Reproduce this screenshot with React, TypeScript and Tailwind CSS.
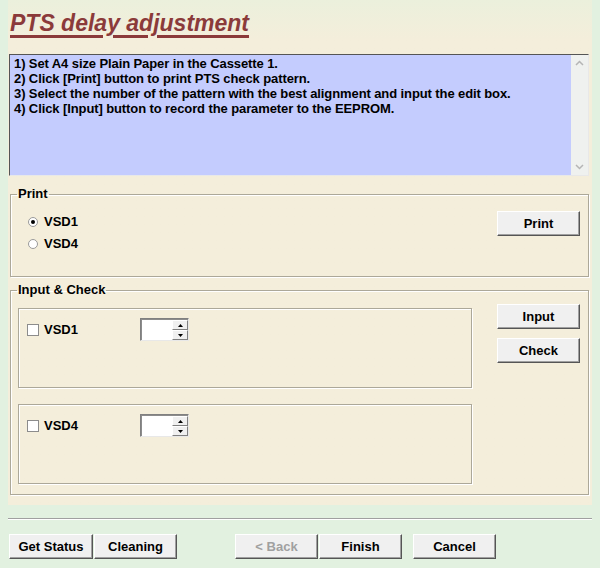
import React, { useState } from 'react';

const font = { fontFamily: '"Liberation Sans", Arial, sans-serif' };

const WinButton: React.FC<{ label: string; disabled?: boolean; className?: string }> = ({ label, disabled, className }) => (
  <button
    className={`h-[25px] w-[83px] bg-[#f0f0f0] border border-t-white border-l-white border-r-[#555] border-b-[#555] shadow-[inset_-1px_-1px_0_#a0a0a0] text-[13px] font-bold ${
      disabled ? 'text-[#a0a0a0]' : 'text-black'
    } ${className || ''}`}
  >
    {label}
  </button>
);

const Radio: React.FC<{ checked: boolean; label: string; onClick: () => void }> = ({ checked, label, onClick }) => (
  <div className="flex items-center h-[22px] cursor-default" onClick={onClick}>
    <span className="w-[10px] h-[10px] rounded-full bg-white border border-[#9a9a9a] flex items-center justify-center">
      {checked && <span className="w-[4px] h-[4px] rounded-full bg-black" />}
    </span>
    <span className="ml-[6px] text-[13px] font-bold text-black">{label}</span>
  </div>
);

const Spin: React.FC = () => (
  <div className="flex w-[49px] h-[23px] bg-white border border-t-[#808080] border-l-[#808080] border-r-[#e8e8e8] border-b-[#e8e8e8]">
    <div className="flex-1 border-t border-l border-[#404040]/60" />
    <div className="flex flex-col w-[16px] border-t border-[#404040]/60">
      <div className="flex-1 bg-[#f0f0f0] border border-t-white border-l-white border-r-[#808080] border-b-[#808080] flex items-center justify-center">
        <svg width="5" height="3" viewBox="0 0 5 3"><path d="M2.5 0L5 3H0z" fill="#000" /></svg>
      </div>
      <div className="flex-1 bg-[#f0f0f0] border border-t-white border-l-white border-r-[#808080] border-b-[#808080] flex items-center justify-center">
        <svg width="5" height="3" viewBox="0 0 5 3"><path d="M0 0H5L2.5 3z" fill="#000" /></svg>
      </div>
    </div>
  </div>
);

const CheckRow: React.FC<{ label: string }> = ({ label }) => {
  const [checked, setChecked] = useState(false);
  return (
    <div className="w-[454px] h-[80px] border border-[#aca899] shadow-[inset_1px_1px_0_#fff,1px_1px_0_#fff]">
      <div className="flex items-center pt-[9px] pl-[8px]">
        <span
          className="w-[12px] h-[12px] bg-white border border-[#8c8c8c] flex items-center justify-center"
          onClick={() => setChecked(!checked)}
        >
          {checked && <span className="w-[6px] h-[6px] bg-black" />}
        </span>
        <span className="ml-[5px] w-[96px] text-[13px] font-bold text-black">{label}</span>
        <Spin />
      </div>
    </div>
  );
};

const steps = [
  '1) Set A4 size Plain Paper in the Cassette 1.',
  '2) Click [Print] button to print PTS check pattern.',
  '3) Select the number of the pattern with the best alignment and input the edit box.',
  '4) Click [Input] button to record the parameter to the EEPROM.',
];

export default function App() {
  const [vsd, setVsd] = useState<'VSD1' | 'VSD4'>('VSD1');

  return (
    <div className="w-[600px] h-[568px] bg-[#e2f1e0] overflow-hidden" style={font}>
      <div className="mx-[8px] h-[505px] bg-gradient-to-b from-[#ebf0dc] to-[#f4eedb] to-[40px] pl-[1px] pr-[3px]">
        <div className="h-[54px] pt-[9px] pl-[1px]">
          <h1 className="text-[23px] font-bold italic text-[#8b3a3a] underline decoration-[3px] underline-offset-[4px] leading-[28px]">
            PTS delay adjustment
          </h1>
        </div>

        <div className="flex h-[122px] bg-[#c4ccfe] border border-t-[#555] border-l-[#555] border-r-[#e8e8e8] border-b-[#e8e8e8]">
          <div className="flex-1 pl-[4px] pt-[1px] text-[13px] tracking-[-0.1px] font-bold leading-[15px] text-black">
            {steps.map(s => (
              <div key={s}>{s}</div>
            ))}
          </div>
          <div className="w-[17px] bg-[#eff1ef] flex flex-col justify-between items-center py-[5px]">
            <svg width="9" height="6" viewBox="0 0 9 6"><path d="M1 5L4.5 1.5L8 5" stroke="#b5b5b5" strokeWidth="1.5" fill="none" /></svg>
            <svg width="9" height="6" viewBox="0 0 9 6"><path d="M1 1L4.5 4.5L8 1" stroke="#b5b5b5" strokeWidth="1.5" fill="none" /></svg>
          </div>
        </div>

        <fieldset className="mt-[11px] ml-[1px] h-[90px] border border-[#aca899] shadow-[inset_1px_1px_0_#fff,1px_1px_0_#fff]">
          <legend className="ml-[6px] px-[1px] text-[13px] font-bold leading-[14px] text-black">Print</legend>
          <div className="flex justify-between pr-[8px]">
            <div className="pl-[17px] pt-[10px]">
              <Radio checked={vsd === 'VSD1'} label="VSD1" onClick={() => setVsd('VSD1')} />
              <Radio checked={vsd === 'VSD4'} label="VSD4" onClick={() => setVsd('VSD4')} />
            </div>
            <WinButton label="Print" className="mt-[10px] w-[82px]" />
          </div>
        </fieldset>

        <fieldset className="mt-[6px] ml-[1px] h-[212px] border border-[#aca899] shadow-[inset_1px_1px_0_#fff,1px_1px_0_#fff]">
          <legend className="ml-[6px] px-[1px] text-[13px] font-bold leading-[14px] text-black">Input &amp; Check</legend>
          <div className="flex justify-between pr-[8px]">
            <div className="pl-[7px] pt-[11px] flex flex-col gap-[16px]">
              <CheckRow label="VSD1" />
              <CheckRow label="VSD4" />
            </div>
            <div className="pt-[7px] flex flex-col gap-[9px]">
              <WinButton label="Input" />
              <WinButton label="Check" />
            </div>
          </div>
        </fieldset>
      </div>

      <div className="mx-[8px] mt-[13px] h-[2px] border-t border-[#a0a0a0] border-b border-b-white" />

      <div className="flex pl-[9px] mt-[14px]">
        <WinButton label="Get Status" className="w-[84px]" />
        <WinButton label="Cleaning" className="ml-[1px] w-[82px]" />
        <WinButton label="< Back" disabled className="ml-[58px]" />
        <WinButton label="Finish" className="ml-[1px]" />
        <WinButton label="Cancel" className="ml-[11px]" />
      </div>
    </div>
  );
}
